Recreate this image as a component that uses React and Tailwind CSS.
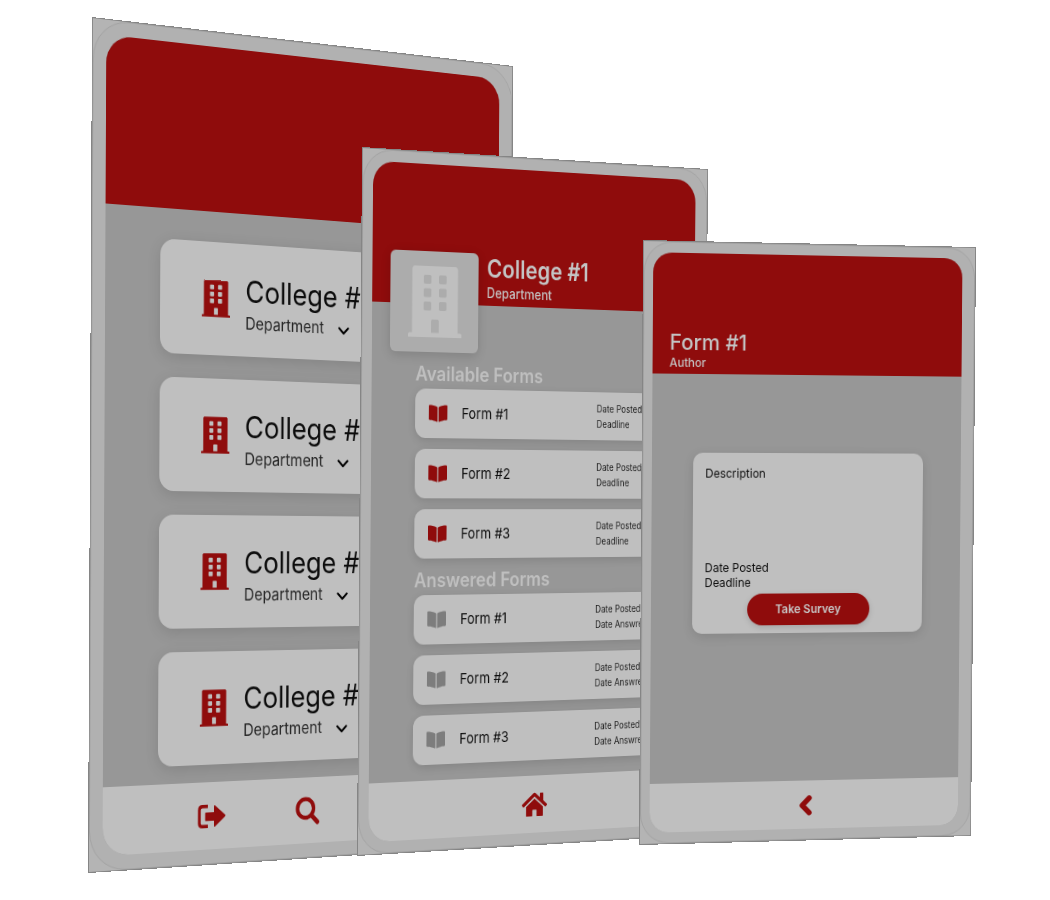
import React from "react";
import { FaBookOpen, FaBuilding, FaHome } from "react-icons/fa";

// Projects a flat w x h panel onto four corners (top-left, clockwise).
function project(w, h, [[x0, y0], [x1, y1], [x2, y2], [x3, y3]]) {
  const dx1 = x1 - x2;
  const dy1 = y1 - y2;
  const dx2 = x3 - x2;
  const dy2 = y3 - y2;
  const sx = x0 - x1 + x2 - x3;
  const sy = y0 - y1 + y2 - y3;
  const det = dx1 * dy2 - dx2 * dy1;
  const g = (sx * dy2 - dx2 * sy) / det;
  const k = (dx1 * sy - sx * dy1) / det;
  const m = [
    (x1 - x0 + g * x1) / w, (y1 - y0 + g * y1) / w, 0, g / w,
    (x3 - x0 + k * x3) / h, (y3 - y0 + k * y3) / h, 0, k / h,
    0, 0, 1, 0,
    x0, y0, 0, 1,
  ];
  return `matrix3d(${m.join(",")})`;
}

function Phone({ size, corners, frame, bezel, screen, label, children }) {
  return (
    <section
      aria-label={label}
      className={`absolute top-0 left-0 origin-top-left border border-[#858585] bg-[#b4b4b4] ${frame}`}
      style={{ transform: project(size[0], size[1], corners) }}
    >
      <div className={`h-full border border-[#a3a3a3] bg-[#b1b1b1] ${bezel}`}>
        <div className={`flex h-full flex-col overflow-hidden bg-[#979797] ${screen}`}>{children}</div>
      </div>
    </section>
  );
}

function Chevron({ className, d }) {
  return (
    <svg viewBox="0 0 16 16" className={className} fill="none" stroke="currentColor" strokeLinecap="round" strokeLinejoin="round" aria-hidden="true">
      <path d={d} />
    </svg>
  );
}

function SignOutIcon({ className }) {
  return (
    <svg viewBox="0 0 100 72" className={className} stroke="currentColor" strokeLinejoin="round" aria-hidden="true">
      <path d="M36 5H17Q6 5 6 16V57Q6 67 17 67H36" fill="none" strokeWidth="10" />
      <path d="M29 26H60V5L96 36 60 67V48H29Z" fill="currentColor" strokeWidth="5" />
    </svg>
  );
}

function SearchIcon({ className }) {
  return (
    <svg viewBox="0 0 94 92" className={className} fill="none" stroke="currentColor" strokeLinecap="round" aria-hidden="true">
      <circle cx="40" cy="38" r="30" strokeWidth="13" />
      <path d="M64 63 84 83" strokeWidth="15" />
    </svg>
  );
}

function CollegeCard({ name }) {
  return (
    <article className="flex h-[116px] shrink-0 items-center gap-[18px] rounded-2xl bg-[#bfbfbf] pl-12 shadow-[0_4px_16px_rgba(0,0,0,0.12)]">
      <FaBuilding className="h-[38px] w-[33px] shrink-0 text-[#8f0c0c]" />
      <div className="pt-2">
        <h2 className="text-[31px] leading-9 font-normal whitespace-nowrap">{name}</h2>
        <button type="button" className="mt-[3px] flex items-center gap-4 text-[17px] leading-6 text-[#262626]">
          Department
          <Chevron className="mt-1 h-4 w-4 text-black [stroke-width:2.4]" d="M2.5 5.5 8 11l5.5-5.5" />
        </button>
      </div>
    </article>
  );
}

function FormCard({ name, second, iconClass }) {
  return (
    <li className="flex h-[50px] items-center rounded-xl bg-[#bfbfbf] pl-4 shadow-[0_3px_10px_rgba(0,0,0,0.12)]">
      <FaBookOpen className={`h-5 w-[22px] shrink-0 ${iconClass}`} />
      <span className="flex-1 pl-[17px] text-[15px] whitespace-nowrap">{name}</span>
      <div className="w-[76px] text-[10px] leading-4 whitespace-nowrap text-[#1c1c1c]">
        <p>Date Posted</p>
        <p>{second}</p>
      </div>
    </li>
  );
}

function FormSection({ title, second, iconClass }) {
  return (
    <section>
      <h3 className="text-xl leading-7 font-semibold text-[#bfbfbf]">{title}</h3>
      <ul className="mt-px flex flex-col gap-[11px]">
        {["Form #1", "Form #2", "Form #3"].map((name) => (
          <FormCard key={name} name={name} second={second} iconClass={iconClass} />
        ))}
      </ul>
    </section>
  );
}

export default function App() {
  return (
    <main className="relative min-h-screen overflow-hidden bg-white font-['Inter','Liberation_Sans',sans-serif] text-[#0c0c0c]">
      <Phone
        label="Colleges"
        size={[512, 855]}
        corners={[[92, 17], [513, 66], [509, 845], [88, 873]]}
        frame="h-[855px] w-[512px]"
        bezel="rounded-[40px] py-3.5 pr-4 pl-3.5"
        screen="rounded-[28px]"
      >
        <header className="h-[169px] shrink-0 bg-[#8f0c0c]" />
        <div className="flex flex-1 flex-col gap-6 pt-[31px] pr-[60px] pl-[62px]">
          {["College #1", "College #2", "College #3", "College #4"].map((name) => (
            <CollegeCard key={name} name={name} />
          ))}
        </div>
        <nav className="flex h-[69px] shrink-0 items-center gap-[82px] bg-[#bfbfbf] pl-[108px] text-[#8f0c0c]">
          <button type="button" aria-label="Sign out"><SignOutIcon className="h-6 w-[33px]" /></button>
          <button type="button" aria-label="Search"><SearchIcon className="h-[30px] w-[31px]" /></button>
        </nav>
      </Phone>

      <Phone
        label="College"
        size={[424, 709]}
        corners={[[362, 147], [708, 169], [703, 835], [357, 856]]}
        frame="h-[709px] w-[424px]"
        bezel="rounded-[34px] py-[11px] pr-3.5 pl-[11px]"
        screen="rounded-[24px]"
      >
        <header className="relative z-10 flex h-[141px] shrink-0 items-start gap-[10px] bg-[#8f0c0c] pt-[88px] pl-[21px] text-[#c4c4c4]">
          <div className="flex h-[102px] w-[104px] shrink-0 items-center justify-center rounded-md bg-[#acacac] shadow-[0_3px_12px_rgba(0,0,0,0.15)]">
            <FaBuilding className="h-[72px] w-[63px] text-[#bfbfbf]" />
          </div>
          <div className="whitespace-nowrap">
            <h1 className="text-[25px] leading-[30px] font-semibold">College #1</h1>
            <p className="text-sm leading-5 font-medium">Department</p>
          </div>
        </header>
        <div className="flex flex-1 flex-col gap-2 pt-[57px] pr-12 pl-[51px]">
          <FormSection title="Available Forms" second="Deadline" iconClass="text-[#8f0c0c]" />
          <FormSection title="Answered Forms" second="Date Answred" iconClass="text-[#7d7d7d]" />
        </div>
        <nav className="flex h-[59px] shrink-0 items-center justify-center bg-[#bfbfbf] text-[#8f0c0c]">
          <button type="button" aria-label="Home"><FaHome className="h-7 w-[31px]" /></button>
        </nav>
      </Phone>

      <Phone
        label="Form"
        size={[362, 605]}
        corners={[[643, 240], [976, 247], [971, 836], [639, 845]]}
        frame="h-[605px] w-[362px]"
        bezel="rounded-[30px] py-2.5 pr-[13px] pl-[9px]"
        screen="rounded-[20px]"
      >
        <header className="flex h-[121px] shrink-0 flex-col justify-end bg-[#8f0c0c] pb-[3px] pl-[18px] text-[#c4c4c4]">
          <h1 className="text-[22px] leading-[26px] font-medium">Form #1</h1>
          <p className="text-xs leading-4 font-medium">Author</p>
        </header>
        <div className="flex-1 pt-[79px] pr-[42px] pl-11">
          <article className="flex h-[182px] flex-col rounded-[10px] bg-[#bfbfbf] px-[13px] pt-[13px] pb-2 text-xs shadow-[0_3px_12px_rgba(0,0,0,0.12)]">
            <p className="flex-1 leading-4">Description</p>
            <p className="leading-[15px]">Date Posted</p>
            <p className="leading-[15px]">Deadline</p>
            <button type="button" className="mt-1 h-8 w-[133px] self-center rounded-full bg-[#8f0c0c] font-semibold text-[#c8c8c8] shadow-[0_2px_6px_rgba(0,0,0,0.15)]">
              Take Survey
            </button>
          </article>
        </div>
        <nav className="flex h-[49px] shrink-0 items-center justify-center bg-[#bfbfbf] text-[#8f0c0c]">
          <button type="button" aria-label="Back">
            <Chevron className="h-[22px] w-[22px] [stroke-width:4]" d="M10.8 2.8 5.2 8.2l5.6 5.4" />
          </button>
        </nav>
      </Phone>
    </main>
  );
}
